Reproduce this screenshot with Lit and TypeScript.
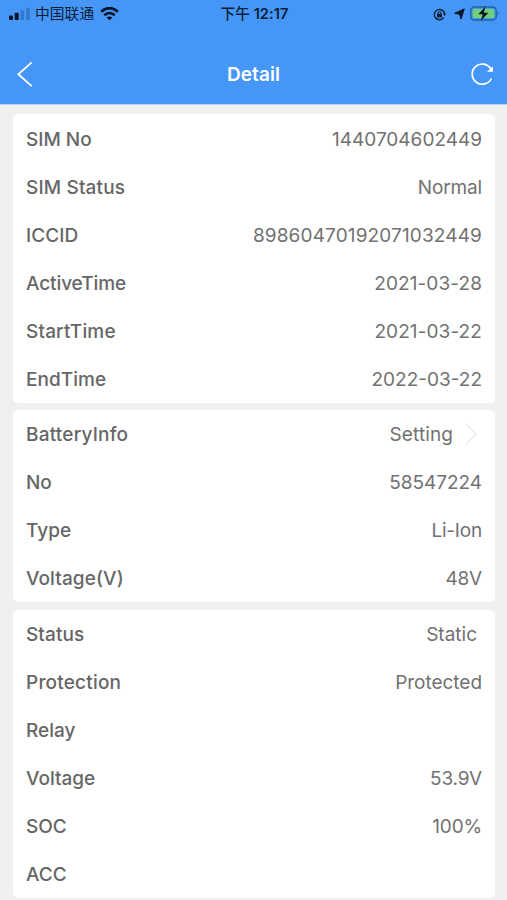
import { LitElement, html, css } from "lit";
import { customElement, property } from "lit/decorators.js";
import { styleMap } from "lit/directives/style-map.js";

interface Row {
  label: string;
  value?: string;
  link?: boolean;
  inset?: boolean;
  /** Letter spacing in px for the label and the value. */
  track?: [number, number];
}

const groups: Row[][] = [
  [
    { label: "SIM No", value: "1440704602449" },
    { label: "SIM Status", value: "Normal", track: [0.15, -0.15] },
    { label: "ICCID", value: "89860470192071032449", track: [0.1, 0.14] },
    { label: "ActiveTime", value: "2021-03-28", track: [-0.1, 0.1] },
    { label: "StartTime", value: "2021-03-22", track: [0.15, 0.1] },
    { label: "EndTime", value: "2022-03-22", track: [0.05, 0] },
  ],
  [
    { label: "BatteryInfo", value: "Setting", link: true, track: [0.2, 0.1] },
    { label: "No", value: "58547224", track: [0, -0.05] },
    { label: "Type", value: "Li-Ion", track: [0, -0.2] },
    { label: "Voltage(V)", value: "48V", track: [0.1, -0.2] },
  ],
  [
    { label: "Status", value: "Static", inset: true, track: [0.1, 0] },
    { label: "Protection", value: "Protected", track: [0.2, -0.03] },
    { label: "Relay" },
    { label: "Voltage", value: "53.9V", track: [0, -0.2] },
    { label: "SOC", value: "100%", track: [0, -0.15] },
    { label: "ACC" },
  ],
];

@customElement("status-bar")
class StatusBar extends LitElement {
  static styles = css`
    :host {
      display: grid;
      grid-template-columns: 1fr auto 1fr;
      align-items: center;
      height: 27px;
      padding: 0 7px 0 9px;
      color: #0b1e38;
      font: 500 14px/27px Inter, "Noto Sans CJK SC", sans-serif;
    }
    .side { display: flex; align-items: center; }
    .end { justify-content: flex-end; }
    .carrier { margin: 0 6px 0 4px; font-size: 14.8px; font-weight: 400; }
    .time { padding-top: 1px; font-size: 14.6px; font-weight: 600; letter-spacing: 0.05px; }
    .period { font-weight: 500; }
    svg { display: block; flex: none; }
    .lock { margin-right: 8px; }
    .arrow { margin-right: 5px; }
  `;
  render() {
    return html`
      <div class="side">
        <svg width="22" height="14" viewBox="0 0 22 14">
          <rect x="0" y="8.5" width="4" height="4.5" rx="1" fill="#061426" />
          <rect x="5.7" y="5.8" width="4" height="7.2" rx="1" fill="#061426" />
          <rect x="11.5" y="3.2" width="3.6" height="9.8" rx="1" fill="#3179c9" />
          <rect x="17.2" y="0.8" width="3.6" height="12.2" rx="1" fill="#3179c9" />
        </svg>
        <span class="carrier">中国联通</span>
        <svg width="19" height="14" viewBox="0 0 19 14" fill="none" stroke="#061426" stroke-width="2.7">
          <path d="M1.2 4.7C6 0 13 0 17.8 4.7" />
          <path d="M4.3 8.3C7.4 5.4 11.6 5.4 14.7 8.3" />
          <path d="M9.5 13.3L6.6 10.6Q9.5 8.3 12.4 10.6Z" fill="#061426" stroke="none" />
        </svg>
      </div>
      <span class="time"><span class="period">下午</span> 12:17</span>
      <div class="side end">
        <svg class="lock" width="13" height="13" viewBox="0 0 13 13" fill="none" stroke="#071a30">
          <path d="M10.7 9.7A5.2 5.2 0 1 1 11.7 6" stroke-width="1.3" />
          <path d="M10 5.6h3.1l-1.5 2.3z" fill="#071a30" stroke="none" />
          <rect x="4" y="5.8" width="5" height="3.6" rx=".6" fill="#071a30" stroke="none" />
          <path d="M5 6V4.9a1.5 1.5 0 0 1 3 0V6" stroke-width="1" />
        </svg>
        <svg class="arrow" width="11" height="12" viewBox="0 0 11 12">
          <path d="M10.3.9L7 11 5.6 6.2.7 5.3Z" fill="#061426" stroke="#061426" stroke-linejoin="round" />
        </svg>
        <svg width="30" height="16" viewBox="0 0 30 16">
          <rect x=".8" y="1" width="25.4" height="13" rx="3.6" fill="none" stroke="#22619f" stroke-width="1.3" />
          <rect x="2.7" y="2.9" width="21.6" height="9.2" rx="2" fill="#70cf78" />
          <path d="M27.6 5.1q2.2 2.4 0 4.8z" fill="#22619f" />
          <path d="M15.5.5L8.3 8.2h4.5L10.8 14.7 18.4 6.8H13.8Z" fill="#05101d" />
        </svg>
      </div>
    `;
  }
}

@customElement("nav-bar")
class NavBar extends LitElement {
  static styles = css`
    :host {
      display: grid;
      grid-template-columns: 1fr auto 1fr;
      align-items: center;
      height: 77px;
      box-sizing: border-box;
      padding: 17px 13px 0;
      color: #fff;
    }
    .title { padding-top: 2px; font: 600 19px/24px Inter, sans-serif; letter-spacing: 0.1px; }
    svg { display: block; }
    .back { margin-left: 3px; }
    .refresh { justify-self: end; }
  `;
  render() {
    return html`
      <svg class="back" width="18" height="26" viewBox="0 0 18 26" fill="none" stroke="#fff" stroke-width="1.8">
        <path d="M15.7 1.3L2.3 13.3 15.7 25.1" />
      </svg>
      <span class="title">Detail</span>
      <svg class="refresh" width="24" height="24" viewBox="0 0 24 24">
        <path d="M21.4 16.5A10.1 10.1 0 1 1 20.9 6.8" fill="none" stroke="#fff" stroke-width="1.7" />
        <path d="M23 4.2V9.8h-6z" fill="#fff" />
      </svg>
    `;
  }
}

@customElement("info-card")
class InfoCard extends LitElement {
  @property({ attribute: false }) rows: Row[] = [];
  static styles = css`
    :host {
      display: block;
      background: #fff;
      border-radius: 5px;
      padding: 1px 13px 0;
    }
    .row {
      display: flex;
      justify-content: space-between;
      align-items: center;
      height: 48px;
      font: 400 19px/24px Inter, sans-serif;
      color: #717171;
    }
    .row:last-child { margin-bottom: -1px; }
    .label { font-weight: 550; color: #666; }
    .value { display: flex; align-items: center; }
    .inset { padding-right: 5px; }
    .chevron { display: block; margin: -2px 4px 0 11px; }
  `;
  render() {
    return this.rows.map((r) => {
      const [label, value] = r.track ?? [0, 0];
      return html`<div class="row">
        <span class="label" style=${styleMap({ letterSpacing: `${label}px` })}>${r.label}</span>
        <span class="value ${r.inset ? "inset" : ""}" style=${styleMap({ letterSpacing: `${value}px` })}>${r.value ?? ""}${r.link
          ? html`<svg class="chevron" width="14" height="24" viewBox="0 0 14 24" fill="none" stroke="#e9e9e9" stroke-width="1.2">
              <path d="M1.5 1.5L12.3 12 1.5 22.5" />
            </svg>`
          : ""}</span>
      </div>`;
    });
  }
}

@customElement("app-root")
class AppRoot extends LitElement {
  static styles = css`
    :host {
      display: block;
      height: 900px;
      overflow: hidden;
      background: #f0f0f0;
    }
    .header { background: #4596f7; border-bottom: 1px solid #b3d3f8; }
    .cards {
      display: flex;
      flex-direction: column;
      gap: 8px;
      padding: 9px 12px 0 13px;
    }
    .first { padding-top: 1.5px; margin-bottom: -0.5px; }
  `;
  render() {
    return html`
      <div class="header">
        <status-bar></status-bar>
        <nav-bar></nav-bar>
      </div>
      <div class="cards">
        ${groups.map((g, i) => html`<info-card class=${i === 0 ? "first" : ""} .rows=${g}></info-card>`)}
      </div>
    `;
  }
}
